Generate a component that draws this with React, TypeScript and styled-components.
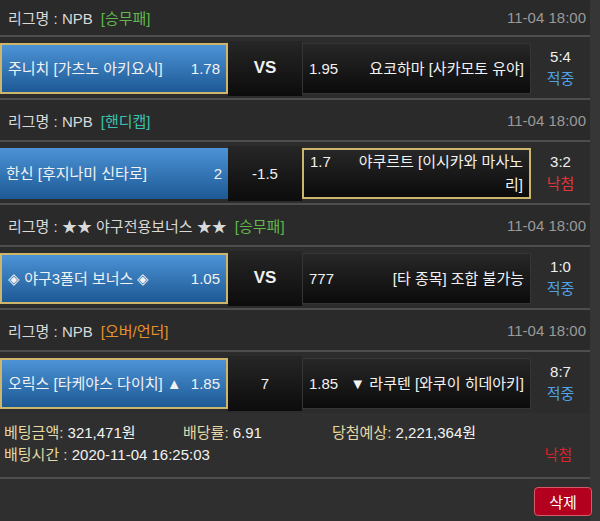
import React from "react";
import styled, { createGlobalStyle } from "styled-components";

const GlobalStyle = createGlobalStyle`
  html, body {
    margin: 0;
    padding: 0;
    background: #363636;
    overflow: hidden;
  }
  body {
    font-family: "Liberation Sans", "Noto Sans CJK KR", sans-serif;
    font-size: 15px;
    color: #e6e6e6;
  }
`;

const Page = styled.div`
  width: 590px;
  background: #2c2c2c;
`;

const Header = styled.div<{ $first?: boolean }>`
  height: ${(p) => (p.$first ? 35 : 40)}px;
  display: flex;
  align-items: center;
  justify-content: space-between;
  padding: 0 4px 0 8px;
  background: #2a2a2a;
`;

const League = styled.div`
  color: #d9d9d9;
  display: flex;
  gap: 8px;
`;

const Tag = styled.span<{ $color: string }>`
  color: ${(p) => p.$color};
`;

const Time = styled.div`
  color: #9a9a9a;
`;

const Line = styled.div`
  height: 2px;
  background: #4e4e4e;
`;

const GameRow = styled.div`
  height: 61px;
  display: grid;
  grid-template-columns: 228px 74px 229px 59px;
  align-items: center;
`;

const Pick = styled.div<{ $home?: boolean; $selected?: boolean }>`
  box-sizing: border-box;
  height: 51px;
  display: flex;
  align-items: center;
  padding: 0 6px;
  color: #f2f2f2;
  background: ${(p) =>
    p.$home
      ? "linear-gradient(to bottom, #4c93d6, #1d5995)"
      : "linear-gradient(to bottom, #272727, #0b0b0b)"};
  border: ${(p) =>
    p.$selected ? "2px solid #cdb56c" : p.$home ? "none" : "1px solid #353535"};
  margin-top: 1px;
`;

const PickInner = styled.div`
  flex: 1;
  display: flex;
  align-items: baseline;
  justify-content: space-between;
  gap: 8px;
`;

const Name = styled.div<{ $right?: boolean }>`
  text-align: ${(p) => (p.$right ? "right" : "left")};
  line-height: 23px;
  max-width: 176px;
`;

const Odds = styled.div`
  white-space: nowrap;
  line-height: 23px;
`;

const Middle = styled.div<{ $bold?: boolean }>`
  height: 55px;
  display: flex;
  align-items: center;
  justify-content: center;
  background: linear-gradient(to bottom, #262626, #0c0c0c);
  font-weight: ${(p) => (p.$bold ? 700 : 400)};
  font-size: ${(p) => (p.$bold ? 17 : 15)}px;
  color: #f0f0f0;
  margin-top: 1px;
`;

const Result = styled.div`
  display: flex;
  flex-direction: column;
  align-items: center;
  gap: 2px;
  line-height: 20px;
`;

const Score = styled.div`
  color: #f0f0f0;
`;

const Status = styled.div<{ $win: boolean }>`
  color: ${(p) => (p.$win ? "#4fa2e4" : "#e0363a")};
`;

const Summary = styled.div`
  height: 64px;
  padding: 7px 4px 0;
  box-sizing: border-box;
  background: #2f2f2f;
`;

const SummaryRow = styled.div`
  display: grid;
  grid-template-columns: 179px 149px 1fr;
  height: 22px;
  align-items: center;
`;

const Wide = styled.span`
  grid-column: 1 / 3;
`;

const Label = styled.span`
  color: #e4d9a4;
`;

const Value = styled.span`
  color: #f2f2f2;
`;

const Lost = styled.span`
  justify-self: end;
  margin-right: 14px;
  color: #d8232a;
`;

const Footer = styled.div`
  height: 44px;
  display: flex;
  align-items: center;
  justify-content: flex-end;
  background: #2f2f2f;
`;

const DeleteButton = styled.button`
  width: 58px;
  height: 29px;
  margin-right: -2px;
  border: 1px solid #d65a6a;
  border-radius: 4px;
  background: #b2001e;
  color: #fff;
  font-family: inherit;
  font-size: 15px;
  cursor: pointer;
`;

type Game = {
  league: string;
  tag: string;
  tagColor: string;
  time: string;
  home: string;
  homeOdds: string;
  mid: string;
  away: string;
  awayOdds: string;
  pick: "home" | "away";
  score: string;
  win: boolean;
};

const games: Game[] = [
  {
    league: "리그명 : NPB",
    tag: "[승무패]",
    tagColor: "#5fb94a",
    time: "11-04 18:00",
    home: "주니치 [가츠노 아키요시]",
    homeOdds: "1.78",
    mid: "VS",
    away: "요코하마 [사카모토 유야]",
    awayOdds: "1.95",
    pick: "home",
    score: "5:4",
    win: true,
  },
  {
    league: "리그명 : NPB",
    tag: "[핸디캡]",
    tagColor: "#3cc3b0",
    time: "11-04 18:00",
    home: "한신 [후지나미 신타로]",
    homeOdds: "2",
    mid: "-1.5",
    away: "야쿠르트 [이시카와 마사노리]",
    awayOdds: "1.7",
    pick: "away",
    score: "3:2",
    win: false,
  },
  {
    league: "리그명 : ★★ 야구전용보너스 ★★",
    tag: "[승무패]",
    tagColor: "#5fb94a",
    time: "11-04 18:00",
    home: "◈ 야구3폴더 보너스 ◈",
    homeOdds: "1.05",
    mid: "VS",
    away: "[타 종목] 조합 불가능",
    awayOdds: "777",
    pick: "home",
    score: "1:0",
    win: true,
  },
  {
    league: "리그명 : NPB",
    tag: "[오버/언더]",
    tagColor: "#e7922b",
    time: "11-04 18:00",
    home: "오릭스 [타케야스 다이치] ▲",
    homeOdds: "1.85",
    mid: "7",
    away: "▼ 라쿠텐 [와쿠이 히데아키]",
    awayOdds: "1.85",
    pick: "home",
    score: "8:7",
    win: true,
  },
];

const App = () => {
  return (
    <Page>
      <GlobalStyle />
      {games.map((g, i) => (
        <React.Fragment key={i}>
          <Header $first={i === 0}>
            <League>
              <span>{g.league}</span>
              <Tag $color={g.tagColor}>{g.tag}</Tag>
            </League>
            <Time>{g.time}</Time>
          </Header>
          <Line />
          <GameRow>
            <Pick $home $selected={g.pick === "home"}>
              <PickInner>
                <Name>{g.home}</Name>
                <Odds>{g.homeOdds}</Odds>
              </PickInner>
            </Pick>
            <Middle $bold={g.mid === "VS"}>{g.mid}</Middle>
            <Pick $selected={g.pick === "away"}>
              <PickInner>
                <Odds>{g.awayOdds}</Odds>
                <Name $right>{g.away}</Name>
              </PickInner>
            </Pick>
            <Result>
              <Score>{g.score}</Score>
              <Status $win={g.win}>{g.win ? "적중" : "낙첨"}</Status>
            </Result>
          </GameRow>
          {i < games.length - 1 && <Line />}
        </React.Fragment>
      ))}
      <Summary>
        <SummaryRow>
          <span>
            <Label>베팅금액:</Label> <Value>321,471원</Value>
          </span>
          <span>
            <Label>배당률:</Label> <Value>6.91</Value>
          </span>
          <span>
            <Label>당첨예상:</Label> <Value>2,221,364원</Value>
          </span>
        </SummaryRow>
        <SummaryRow>
          <Wide>
            <Label>배팅시간 :</Label> <Value>2020-11-04 16:25:03</Value>
          </Wide>
          <Lost>낙첨</Lost>
        </SummaryRow>
      </Summary>
      <Line />
      <Footer>
        <DeleteButton>삭제</DeleteButton>
      </Footer>
    </Page>
  );
};

export default App;
